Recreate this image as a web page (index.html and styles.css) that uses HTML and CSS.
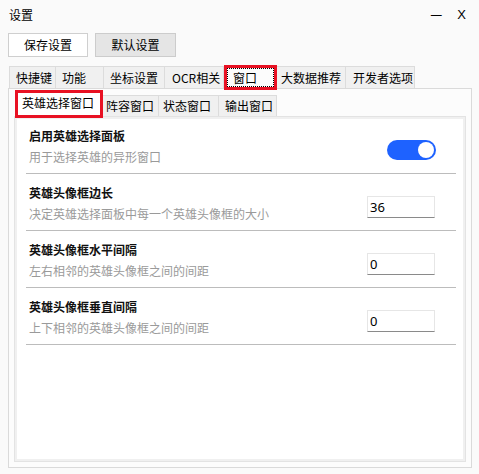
FILE: index.html
```html
<!DOCTYPE html>
<html lang="zh">
<head>
<meta charset="utf-8">
<title>设置</title>
<link rel="stylesheet" href="styles.css">
</head>
<body>
<div class="window">
  <div class="titlebar">
    <span class="title">设置</span>
    <span class="controls"><span class="min">—</span><span class="close">X</span></span>
  </div>
  <div class="toolbar">
    <button class="btn">保存设置</button>
    <button class="btn btn-alt">默认设置</button>
  </div>
  <div class="tabs">
    <div class="tab t1">快捷键</div>
    <div class="tab t2">功能</div>
    <div class="tab t3">坐标设置</div>
    <div class="tab t4">OCR相关</div>
    <div class="tab tab-active"><span class="focus">窗口</span></div>
    <div class="tab t6">大数据推荐</div>
    <div class="tab t7">开发者选项</div>
  </div>
  <div class="pane">
    <div class="subtabs">
      <div class="subtab subtab-active">英雄选择窗口</div>
      <div class="subtab s2">阵容窗口</div>
      <div class="subtab s3">状态窗口</div>
      <div class="subtab s4">输出窗口</div>
    </div>
    <div class="subpane">
      <div class="row">
        <div class="text">
          <div class="label">启用英雄选择面板</div>
          <div class="desc">用于选择英雄的异形窗口</div>
        </div>
        <div class="toggle"><span class="knob"></span></div>
      </div>
      <div class="row">
        <div class="text">
          <div class="label">英雄头像框边长</div>
          <div class="desc">决定英雄选择面板中每一个英雄头像框的大小</div>
        </div>
        <div class="input">36</div>
      </div>
      <div class="row">
        <div class="text">
          <div class="label">英雄头像框水平间隔</div>
          <div class="desc">左右相邻的英雄头像框之间的间距</div>
        </div>
        <div class="input">0</div>
      </div>
      <div class="row">
        <div class="text">
          <div class="label">英雄头像框垂直间隔</div>
          <div class="desc">上下相邻的英雄头像框之间的间距</div>
        </div>
        <div class="input">0</div>
      </div>
    </div>
  </div>
</div>
</body>
</html>
```
FILE: styles.css
```css
* { box-sizing: border-box; }
html, body { margin: 0; padding: 0; }
body {
  width: 479px;
  height: 474px;
  background: #fafafa;
  font-family: "Noto Sans CJK SC", "Noto Sans", sans-serif;
  font-size: 12px;
  color: #000;
  overflow: hidden;
}
.window {
  width: 479px;
  height: 474px;
  background: #fafafa;
  display: flex;
  flex-direction: column;
}
.titlebar {
  height: 30px;
  display: flex;
  align-items: center;
  padding: 0 13px 0 9px;
  line-height: 16px;
}
.controls { margin-left: auto; display: flex; gap: 15px; align-items: center; }
.min { font-size: 12px; font-family: "DejaVu Sans", sans-serif; }
.close { font-family: "Liberation Sans", sans-serif; font-size: 13px; }
.toolbar {
  display: flex;
  gap: 7px;
  padding: 3px 0 0 8px;
}
.btn {
  width: 80px;
  height: 24px;
  border: 1px solid #cfcfcf;
  background: #fff;
  font: inherit;
  font-size: 12px;
  color: #000;
  padding: 0;
  line-height: 20px;
}
.btn-alt { width: 81px; background: #e5e5e5; border-color: #cccccc; }
.tabs {
  display: flex;
  padding-left: 9px;
  margin-top: 8px;
  height: 25px;
  margin-bottom: -2px;
  align-items: flex-start;
}
.tab {
  height: 22px;
  margin-top: 1px;
  background: #f0f0f0;
  border: 1px solid #dcdcdc;
  border-bottom: none;
  border-left: none;
  padding-left: 6px;
  line-height: 21px;
  white-space: nowrap;
}
.t1 { width: 47px; border-left: 1px solid #dcdcdc; }
.t2 { width: 48px; }
.t3 { width: 61px; }
.t4 { width: 59px; padding-left: 7px; }
.t6 { width: 69px; padding-left: 4px; }
.t7 { width: 69px; padding-left: 7px; }
.tab-active {
  position: relative;
  z-index: 1;
  width: 53px;
  height: 25px;
  margin-top: 0;
  background: #fcfcfc;
  border: 3px solid #e81123;
  padding: 0;
  display: flex;
}
.focus {
  flex: 1;
  margin: 0 0 0 0;
  border: 1px dotted #000;
  padding-left: 5px;
  line-height: 17px;
}
.pane {
  margin: 0 7px 0 8px;
  height: 380px;
  border: 1px solid #dadada;
  background: #fcfcfc;
  padding: 1px 5px 0 5px;
  display: flex;
  flex-direction: column;
}
.subtabs {
  display: flex;
  height: 27px;
  margin-bottom: -1px;
  align-items: flex-start;
  padding-left: 1px;
}
.subtab {
  height: 21px;
  margin-top: 5px;
  background: #f0f0f0;
  border: 1px solid #dcdcdc;
  border-left: none;
  border-bottom: none;
  line-height: 20px;
  padding-left: 3px;
  white-space: nowrap;
}
.s2 { width: 56px; }
.s3 { width: 60px; padding-left: 4px; }
.s4 { width: 58px; padding-left: 6px; }
.subtab-active {
  position: relative;
  z-index: 1;
  width: 88px;
  height: 28px;
  margin-top: 0;
  background: #fff;
  border: 3px solid #e81123;
  padding-left: 4px;
  line-height: 20px;
}
.subpane {
  height: 346px;
  border: 1px solid #e3e3e3;
  background: #fff;
  box-shadow: inset 2px 2px 0 #f0f0f0, inset -2px -2px 0 #f0f0f0;
  padding: 0 9px 0 11px;
}
.row {
  display: flex;
  align-items: flex-end;
  height: 57px;
  padding: 10px 0 7px 3px;
  border-bottom: 1px solid #bcbcbc;
}
.text { flex: 1; }
.label {
  font-weight: bold;
  line-height: 18px;
  color: #111;
}
.desc {
  margin-top: 3px;
  line-height: 18px;
  color: #9a9a9a;
}
.toggle {
  width: 49px;
  height: 20px;
  border-radius: 10px;
  background: #1e62ff;
  margin: 0 20px 6px 0;
  display: flex;
  align-items: center;
  justify-content: flex-end;
  padding-right: 2px;
}
.knob {
  width: 16px;
  height: 16px;
  border-radius: 50%;
  background: #fff;
}
.input {
  width: 68px;
  height: 22px;
  margin: 0 21px 5px 0;
  background: #fff;
  border: 1px solid #e6e6e6;
  border-bottom: 1px solid #8a8a8a;
  padding-left: 2px;
  font-family: "Noto Sans", sans-serif;
  font-size: 13px;
  line-height: 20px;
}
```
